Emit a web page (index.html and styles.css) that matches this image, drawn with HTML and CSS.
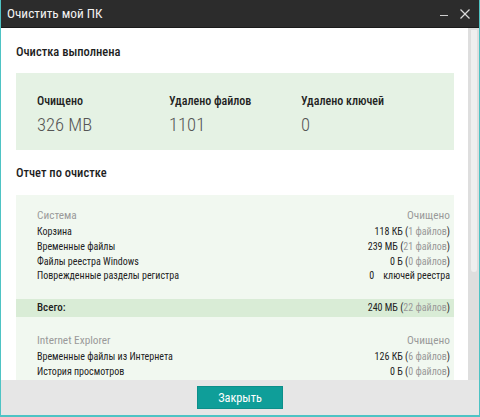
FILE: index.html
```html
<!DOCTYPE html>
<html lang="ru">
  <head>
    <meta charset="UTF-8" />
    <meta name="viewport" content="width=device-width, initial-scale=1.0" />
    <title>Очистить мой ПК</title>
    <link rel="stylesheet" href="styles.css">
  </head>
  <body>
    <div class="window">
      <header class="titlebar">
        <span class="title">Очистить мой ПК</span>
        <div class="controls">
          <svg class="ctl" width="12" height="12" viewBox="0 0 12 12">
            <line x1="1" y1="7.5" x2="9" y2="7.5" stroke="#cfcfcf" stroke-width="1" />
          </svg>
          <svg class="ctl" width="12" height="12" viewBox="0 0 12 12">
            <line x1="1.5" y1="1.5" x2="10.5" y2="10.5" stroke="#d8d8d8" stroke-width="1.2" />
            <line x1="10.5" y1="1.5" x2="1.5" y2="10.5" stroke="#d8d8d8" stroke-width="1.2" />
          </svg>
        </div>
      </header>

      <div class="main">
        <div class="content">
          <h2 class="heading">Очистка выполнена</h2>
          <section class="summary">
            <div class="stat">
              <div class="stat-label">Очищено</div>
              <div class="stat-value">326 MB</div>
            </div>
            <div class="stat">
              <div class="stat-label">Удалено файлов</div>
              <div class="stat-value">1101</div>
            </div>
            <div class="stat">
              <div class="stat-label">Удалено ключей</div>
              <div class="stat-value">0</div>
            </div>
          </section>

          <h2 class="heading heading-report">Отчет по очистке</h2>
          <section class="report">
            <div class="group">
              <div class="row group-title"><span>Система</span><span>Очищено</span></div>
              <div class="row"><span>Корзина</span><span>118 КБ (<em>1 файлов</em>)</span></div>
              <div class="row"><span>Временные файлы</span><span>239 МБ (<em>21 файлов</em>)</span></div>
              <div class="row"><span>Файлы реестра Windows</span><span>0 Б (<em>0 файлов</em>)</span></div>
              <div class="row"><span>Поврежденные разделы регистра</span><span>0&nbsp;&nbsp;&nbsp; ключей реестра</span></div>
            </div>
            <div class="row total"><span>Всего:</span><span>240 МБ (<em>22 файлов</em>)</span></div>
            <div class="group">
              <div class="row group-title"><span>Internet Explorer</span><span>Очищено</span></div>
              <div class="row"><span>Временные файлы из Интернета</span><span>126 КБ (<em>6 файлов</em>)</span></div>
              <div class="row"><span>История просмотров</span><span>0 Б (<em>0 файлов</em>)</span></div>
            </div>
          </section>
        </div>
        <div class="scrollbar">
          <div class="thumb"></div>
        </div>
      </div>

      <footer class="footer">
        <button class="button">Закрыть</button>
      </footer>
    </div>
  </body>
</html>
```

FILE: styles.css
```css
html,
body {
  margin: 0;
  width: 480px;
  height: 417px;
  overflow: hidden;
}
body {
  font-family: "Roboto Condensed", Roboto, sans-serif;
  font-size: 10px;
  color: #222;
  background-color: #fff;
}
.window {
  box-sizing: border-box;
  height: 417px;
  display: flex;
  flex-direction: column;
  border: 1px solid #4ec3c4;
  border-top: 0;
  border-bottom-width: 2px;
}
.titlebar {
  height: 27px;
  flex: none;
  display: flex;
  align-items: center;
  justify-content: space-between;
  background-color: #2c2c2c;
  border-bottom: 1px solid #1b1b1b;
  padding: 0 8px 0 6px;
  color: #f2f2f2;
  font-size: 13.3px;
}
.controls {
  display: flex;
  gap: 8px;
  align-items: center;
}
.ctl {
  display: block;
}
.main {
  flex: 1;
  display: flex;
  min-height: 0;
}
.content {
  flex: 1;
  overflow: hidden;
  padding: 0 14px 0 15px;
}
.scrollbar {
  width: 11px;
  flex: none;
  background-color: #dedede;
  padding: 2px 2px 0 3px;
  box-sizing: border-box;
}
.thumb {
  height: 242px;
  background-color: #efefef;
  border-radius: 0 0 3px 3px;
}
.heading {
  margin: 15px 0 0;
  font-size: 12.5px;
  font-weight: 500;
  line-height: 18px;
  color: #1e1e1e;
}
.heading-report {
  margin-top: 14px;
}
.summary {
  margin-top: 12px;
  height: 77px;
  box-sizing: border-box;
  background-color: #e5f2e4;
  padding: 19px 21px 0;
  display: flex;
}
.stat {
  width: 135px;
}
.stat-label {
  font-size: 12px;
  font-weight: 500;
  line-height: 18px;
  color: #222;
}
.stat-value {
  margin-top: 3px;
  font-size: 18.6px;
  font-weight: 300;
  line-height: 24px;
  color: #555;
}
.report {
  margin-top: 13px;
  background-color: #f1f8f0;
  padding: 11px 0 20px;
}
.row {
  display: flex;
  justify-content: space-between;
  padding: 0 4px 0 21px;
  line-height: 14.8px;
  font-size: 10px;
}
.row em {
  font-style: normal;
  color: #999;
}
.group-title {
  line-height: 19px;
  font-size: 11.3px;
  color: #9a9a9a;
}
.total {
  margin: 15px 0 14px;
  line-height: 18px;
  font-size: 10px;
  background-color: #d9ecd6;
}
.total span:first-child {
  font-size: 11px;
  font-weight: 500;
}
.footer {
  height: 35px;
  flex: none;
  display: flex;
  align-items: center;
  justify-content: center;
  background-color: #e6e6e6;
}
.button {
  width: 86px;
  height: 23px;
  border: 1px solid #0c8f8a;
  background-color: #0f9e99;
  color: #fff;
  font-family: inherit;
  font-size: 12.3px;
  padding: 0;
}
```
